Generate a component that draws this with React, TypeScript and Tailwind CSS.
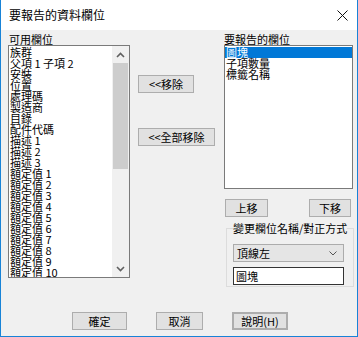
import { ReactNode } from 'react';

const AVAILABLE_FIELDS = [
  '族群',
  '父項 1 子項 2',
  '安裝',
  '位置',
  '處理碼',
  '製造商',
  '目錄',
  '配件代碼',
  '描述 1',
  '描述 2',
  '描述 3',
  '額定值 1',
  '額定值 2',
  '額定值 3',
  '額定值 4',
  '額定值 5',
  '額定值 6',
  '額定值 7',
  '額定值 8',
  '額定值 9',
  '額定值 10',
];

const REPORT_FIELDS = ['圖塊', '子項數量', '標籤名稱'];

function Button({ children, className = '' }: { children: ReactNode; className?: string }) {
  return (
    <div
      className={`flex items-center justify-center h-[18px] bg-[#e1e1e1] border border-[#adadad] text-[11px] leading-[11px] text-black ${className}`}
    >
      {children}
    </div>
  );
}

function Chevron({ up }: { up?: boolean }) {
  return (
    <svg width="9" height="6" viewBox="0 0 9 6" className="text-[#606060]">
      <path
        d={up ? 'M1 5 L4.5 1.5 L8 5' : 'M1 1 L4.5 4.5 L8 1'}
        fill="none"
        stroke="currentColor"
        strokeWidth="1.6"
      />
    </svg>
  );
}

export default function App() {
  return (
    <div className="w-[358px] h-[337px] flex flex-col bg-[#f0f0f0] border-x border-b border-[#1883d7] font-['Noto_Sans_CJK_TC','Noto_Sans',sans-serif] text-black overflow-hidden">
      {/* title bar */}
      <div className="h-[30px] shrink-0 bg-white flex items-center justify-between pl-[8px] pr-[9px]">
        <span className="text-[12px] leading-[14px] text-black">要報告的資料欄位</span>
        <svg width="11" height="11" viewBox="0 0 11 11">
          <path d="M0.5 0.5 L10.5 10.5 M10.5 0.5 L0.5 10.5" stroke="#111" strokeWidth="1" />
        </svg>
      </div>

      <div className="flex pl-[7px] pt-[3px]">
        {/* available fields */}
        <div className="w-[122px] flex flex-col">
          <div className="h-[12px] text-[11px] leading-[12px] pl-[1px]">可用欄位</div>
          <div className="h-[233px] border border-[#7a7a7a] bg-white flex">
            <div className="flex-1 overflow-hidden pl-[1px] pt-[1px]">
              {AVAILABLE_FIELDS.map((f) => (
                <div key={f} className="h-[11px] text-[11px] leading-[11px] whitespace-nowrap">
                  {f}
                </div>
              ))}
            </div>
            <div className="w-[17px] flex flex-col bg-[#f0f0f0]">
              <div className="h-[17px] flex items-center justify-center">
                <Chevron up />
              </div>
              <div className="flex-1">
                <div className="h-[106px] mx-[1px] bg-[#cdcdcd]" />
              </div>
              <div className="h-[17px] flex items-center justify-center">
                <Chevron />
              </div>
            </div>
          </div>
        </div>

        {/* move buttons */}
        <div className="w-[86px] ml-[8px] flex flex-col pt-[42px]">
          <Button className="w-[56px]">&lt;&lt;移除</Button>
          <Button className="w-[77px] mt-[35px]">&lt;&lt;全部移除</Button>
        </div>

        {/* report fields */}
        <div className="w-[129px] flex flex-col">
          <div className="h-[12px] text-[11px] leading-[12px]">要報告的欄位</div>
          <div className="h-[144px] border border-[#7a7a7a] bg-white pt-[1px]">
            {REPORT_FIELDS.map((f, i) => (
              <div
                key={f}
                className={`h-[11px] text-[11px] leading-[11px] pl-[1px] whitespace-nowrap ${
                  i === 0 ? 'bg-[#0078d7] text-white' : ''
                }`}
              >
                {f}
              </div>
            ))}
          </div>
          <div className="flex justify-between mt-[10px] pl-[1px] pr-[2px]">
            <Button className="w-[43px]">上移</Button>
            <Button className="w-[42px]">下移</Button>
          </div>
          <fieldset className="mt-[5px] ml-[2px] border border-[#dcdcdc] px-[6px] pb-[1px]">
            <legend className="text-[11px] leading-[12px] whitespace-nowrap">變更欄位名稱/對正方式</legend>
            <div className="mt-[10px] h-[18px] w-[111px] bg-[#e5e5e5] border border-[#acacac] flex items-center justify-between pl-[3px] pr-[6px] text-[11px] leading-[11px]">
              <span>頂線左</span>
              <svg width="8" height="5" viewBox="0 0 8 5">
                <path d="M0.5 0.5 L4 4 L7.5 0.5" fill="none" stroke="#555" strokeWidth="1" />
              </svg>
            </div>
            <div className="mt-[5px] h-[18px] w-[111px] bg-white border border-[#333] flex items-center pl-[2px] text-[11px] leading-[11px]">
              圖塊
            </div>
          </fieldset>
        </div>
      </div>

      {/* dialog buttons */}
      <div className="flex mt-[25px] ml-[71px] gap-[29px]">
        <Button className="w-[55px]">確定</Button>
        <Button className="w-[47px]">取消</Button>
        <Button className="w-[56px] border-2 border-[#0078d7]">說明(H)</Button>
      </div>
    </div>
  );
}
